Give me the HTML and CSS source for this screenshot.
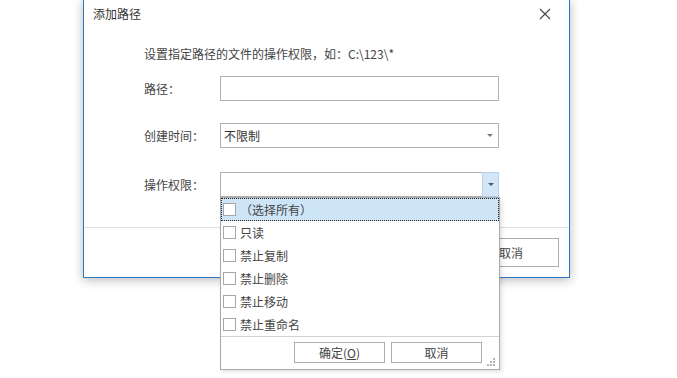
FILE: index.html
```html
<!DOCTYPE html>
<html lang="zh-CN">
<head>
    <meta charset="UTF-8">
    <meta name="viewport" content="width=device-width, initial-scale=1.0">
    <title>添加路径</title>
<link rel="stylesheet" href="styles.css">
</head>
<body>
<div class="dlg">
    <div class="dlg-title">
        <span>添加路径</span>
        <svg class="close" width="12" height="12" viewBox="0 0 12 12"><path d="M1 1L11 11M11 1L1 11" stroke="#444" stroke-width="1.1" fill="none"/></svg>
    </div>
    <div class="dlg-body">
        <div class="desc">设置指定路径的文件的操作权限，如：C:\123\*</div>
        <div class="row r1">
            <label>路径：</label>
            <div class="box"></div>
        </div>
        <div class="row r2">
            <label>创建时间：</label>
            <div class="box combo"><span>不限制</span><i class="btn"><b class="arr"></b></i></div>
        </div>
        <div class="row r3">
            <label>操作权限：</label>
            <div class="box combo open"><span></span><i class="btn"><b class="arr"></b></i></div>
        </div>
    </div>
    <div class="dlg-foot">
        <button class="fbtn">确定</button>
        <button class="fbtn">取消</button>
    </div>
</div>

<div class="pop">
    <ul class="list">
        <li class="sel"><i class="cb"></i><span>（选择所有）</span></li>
        <li><i class="cb"></i><span>只读</span></li>
        <li><i class="cb"></i><span>禁止复制</span></li>
        <li><i class="cb"></i><span>禁止删除</span></li>
        <li><i class="cb"></i><span>禁止移动</span></li>
        <li><i class="cb"></i><span>禁止重命名</span></li>
    </ul>
    <div class="pop-foot">
        <button class="pbtn">确定(<u>O</u>)</button>
        <button class="pbtn">取消</button>
        <svg class="grip" width="9" height="9" viewBox="0 0 9 9"><g fill="#b5b5b5"><rect x="6" y="0" width="2" height="2"/><rect x="3" y="3" width="2" height="2"/><rect x="6" y="3" width="2" height="2"/><rect x="0" y="6" width="2" height="2"/><rect x="3" y="6" width="2" height="2"/><rect x="6" y="6" width="2" height="2"/></g></svg>
    </div>
</div>
</body>
</html>
```

FILE: styles.css
```css
html,body{margin:0;padding:0;background:#fff;}
body{width:677px;height:378px;overflow:hidden;position:relative;
font-family:"Noto Sans CJK SC","Liberation Sans",sans-serif;font-size:12px;color:#444;}

/* dialog window */
.dlg{position:absolute;left:83px;top:-1px;width:487px;height:279px;box-sizing:border-box;
border:1px solid #2a78c3;background:#fff;box-shadow:0 2px 10px rgba(0,0,0,.28);
display:flex;flex-direction:column;}
.dlg-title{height:27px;line-height:27px;padding-left:9px;display:flex;align-items:center;justify-content:space-between;
color:#333;font-size:12px;}
.close{margin-right:18px;margin-top:1px;}
.dlg-body{padding-left:60px;flex:1;display:flex;flex-direction:column;}
.desc{margin-top:19px;line-height:16px;height:16px;}
.row{display:flex;align-items:center;height:25px;}
.row label{width:76px;line-height:16px;}
.r1{margin-top:14px;}
.r2{margin-top:22px;}
.r3{margin-top:24px;}
.box{width:279px;height:25px;box-sizing:border-box;border:1px solid #b2b2b2;background:#fff;
display:flex;align-items:center;}
.combo span{flex:1;padding-left:3px;line-height:16px;color:#333;}
.combo .btn{width:16px;height:23px;display:flex;align-items:center;justify-content:center;box-sizing:border-box;}
.arr{width:0;height:0;border-left:3px solid transparent;border-right:3px solid transparent;border-top:3px solid #7a7a7a;}
.open .btn{background:#d3e6f7;margin:-1px -1px -1px 0;height:25px;width:17px;border:1px solid #b3d2ee;}
.open .arr{border-top-color:#555;}
.dlg-foot{border-top:1px solid #dfdfdf;padding:10px 10px 10px 0;display:flex;justify-content:flex-end;gap:9px;}
.fbtn{width:96px;height:29px;box-sizing:border-box;border:1px solid #adadad;background:#fff;
font-family:inherit;font-size:12px;color:#444;padding:0;}

/* dropdown list overlay */
.pop{position:absolute;left:220px;top:197px;width:280px;height:173px;box-sizing:border-box;
border:1px solid #a8a8a8;background:#fff;box-shadow:2px 2px 4px rgba(0,0,0,.12);display:flex;flex-direction:column;}
.list{list-style:none;margin:0;padding:0;height:138px;}
.list li{height:23px;display:flex;align-items:center;padding-left:2px;box-sizing:border-box;}
.list li.sel{background:#cde5f7;border:1px dotted #222;padding-left:1px;}
.cb{width:13px;height:13px;box-sizing:border-box;border:1px solid #a6a6a6;background:#fff;margin-right:4px;}
.list li span{line-height:16px;color:#444;}
.pop-foot{flex:1;border-top:1px solid #d2d2d2;display:flex;justify-content:flex-end;align-items:flex-start;
padding:5px 0 0;position:relative;}
.pbtn{width:91px;height:21px;box-sizing:border-box;border:1px solid #adadad;background:#fff;margin-right:6px;
font-family:inherit;font-size:12px;color:#444;padding:0;line-height:19px;}
.pbtn:last-of-type{margin-right:17px;}
.grip{position:absolute;right:3px;bottom:2px;}
```
